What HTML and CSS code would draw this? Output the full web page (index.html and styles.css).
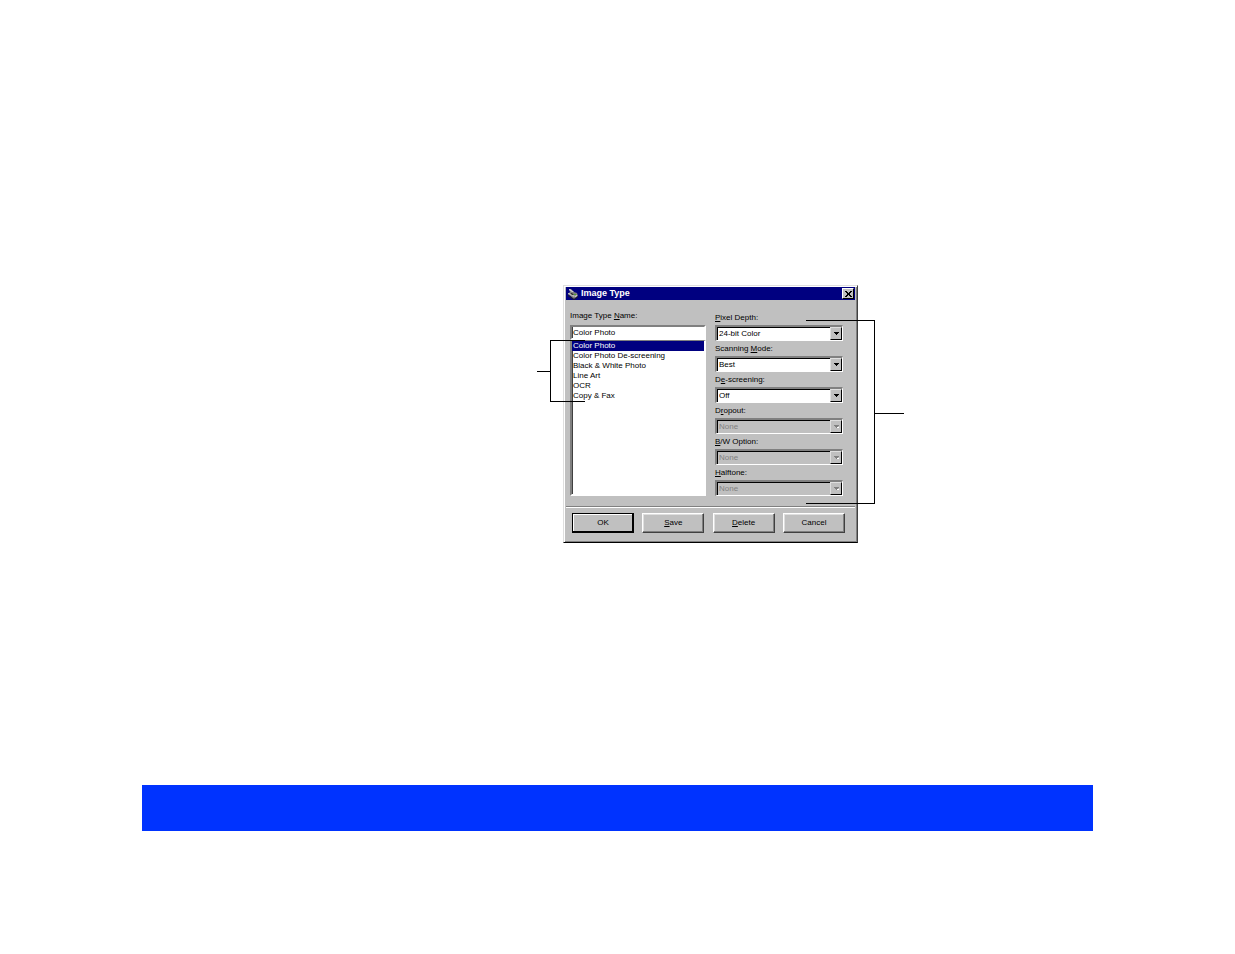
FILE: index.html
```html
<!DOCTYPE html>
<html lang="en">

<head>
    <meta charset="UTF-8">
    <meta name="viewport" content="width=device-width, initial-scale=1.0">
    <title>Image Type</title>
    <link rel="stylesheet" href="styles.css">
</head>

<body>
    <main class="sheet">
        <div class="figure">
            <form class="window">
                <div class="title-bar">
                    <svg class="title-icon" viewBox="0 0 12 12" aria-hidden="true">
                        <path d="M2 1h2l3 3 3 1 1 3-4 3-6-5 2-2z" fill="#808080"/>
                        <path d="M2 1h1l4 3h-2l-3-2z" fill="#d0d0d0"/>
                        <path d="M1 5h3l4 3-1 1-6-3z" fill="#b8b8b8"/>
                        <path d="M3 5h2l2 2h-2z" fill="#303030"/>
                        <path d="M1 7l6 4 4-3v1l-4 3-6-4z" fill="#202020"/>
                        <path d="M7 6h2v1h-2z" fill="#50a030"/>
                        <path d="M8 8l2-1v1l-2 1z" fill="#e0e0e0"/>
                    </svg>
                    <h1>Image Type</h1>
                    <button type="button" class="close" aria-label="Close">
                        <svg viewBox="0 0 7 6" aria-hidden="true"><path d="M0 0l6 6M1 0l6 6M6 0l-6 6M7 0l-6 6" stroke="#000"/></svg>
                    </button>
                </div>

                <div class="panels">
                    <div class="names">
                        <label for="type-name">Image Type <u>N</u>ame:</label>
                        <input type="text" id="type-name" value="Color Photo">
                        <select id="type-list" size="6" aria-label="Image types">
                            <option selected>Color Photo</option>
                            <option>Color Photo De-screening</option>
                            <option>Black &amp; White Photo</option>
                            <option>Line Art</option>
                            <option>OCR</option>
                            <option>Copy &amp; Fax</option>
                        </select>
                    </div>

                    <div class="settings">
                        <div class="field">
                            <label for="depth"><u>P</u>ixel Depth:</label>
                            <div class="combo"><select id="depth"><option>24-bit Color</option></select></div>
                        </div>
                        <div class="field">
                            <label for="mode">Scanning <u>M</u>ode:</label>
                            <div class="combo"><select id="mode"><option>Best</option></select></div>
                        </div>
                        <div class="field">
                            <label for="screening">D<u>e</u>-screening:</label>
                            <div class="combo"><select id="screening"><option>Off</option></select></div>
                        </div>
                        <div class="field">
                            <label for="dropout">D<u>r</u>opout:</label>
                            <div class="combo disabled"><select id="dropout" disabled><option>None</option></select></div>
                        </div>
                        <div class="field">
                            <label for="bw"><u>B</u>/W Option:</label>
                            <div class="combo disabled"><select id="bw" disabled><option>None</option></select></div>
                        </div>
                        <div class="field">
                            <label for="halftone"><u>H</u>alftone:</label>
                            <div class="combo disabled"><select id="halftone" disabled><option>None</option></select></div>
                        </div>
                    </div>
                </div>

                <div class="actions">
                    <button type="button" class="default">OK</button>
                    <button type="button"><span><u>S</u>ave</span></button>
                    <button type="button"><span><u>D</u>elete</span></button>
                    <button type="button">Cancel</button>
                </div>
            </form>

            <div class="callout callout-left"></div>
            <div class="callout callout-right"></div>
        </div>

        <div class="banner"></div>
    </main>
</body>

</html>
```

FILE: styles.css
```css
:root {
    --face: #c0c0c0;
    --light: #ffffff;
    --soft: #dfdfdf;
    --shadow: #808080;
    --dark: #000000;
    --navy: #000080;
    --banner: #0033ff;
}

* {
    margin: 0;
    padding: 0;
    box-sizing: border-box;
}

body {
    background-color: #fff;
    color: #000;
    font-family: "Liberation Sans", Arial, sans-serif;
    font-size: 8px;
    line-height: 12px;
}

input,
select,
button {
    font: inherit;
    color: inherit;
    border-radius: 0;
    outline: none;
}

.sheet {
    padding: 285px 142px 123px;
}

.figure {
    position: relative;
    width: 295px;
    margin-left: 421px;
    margin-bottom: 242px;
}

/* dialog window */
.window {
    background-color: var(--face);
    border: 1px solid;
    border-color: var(--soft) #404040 var(--dark) var(--soft);
    box-shadow: inset 1px 1px var(--light), inset -1px -1px var(--shadow);
    padding: 1px 2px 9px;
}

.title-bar {
    display: flex;
    align-items: center;
    gap: 2px;
    height: 13px;
    padding: 0 1px;
    background-color: var(--navy);
    color: #fff;
}

.title-icon {
    width: 12px;
    height: 12px;
}

.title-bar h1 {
    flex: 1;
    font-size: 9px;
    line-height: 13px;
}

.close {
    display: flex;
    align-items: center;
    justify-content: center;
    width: 12px;
    height: 11px;
    background-color: var(--face);
    border: 1px solid;
    border-color: var(--light) var(--dark) var(--dark) var(--light);
}

.close svg {
    width: 7px;
    height: 6px;
}

.panels {
    display: flex;
    justify-content: space-between;
    padding: 10px 12px 10px 4px;
}

.names {
    display: flex;
    flex-direction: column;
    width: 136px;
}

.names label {
    margin-bottom: 3px;
}

.names input,
.names select,
.combo {
    background-color: #fff;
    border: 2px solid;
    border-color: var(--shadow) var(--light) var(--light) var(--shadow);
    box-shadow: inset 1px 0 #404040;
}

.names input {
    height: 15px;
    padding-left: 1px;
    line-height: 11px;
}

#type-list {
    flex: 1;
    appearance: none;
    overflow: hidden;
    border-top-width: 1px;
}

#type-list option {
    min-height: 10px;
    height: 10px;
    padding: 0 1px;
    line-height: 10px;
}

#type-list option:checked {
    background: linear-gradient(var(--navy), var(--navy));
    color: #fff;
}

.settings {
    display: flex;
    flex-direction: column;
    gap: 2px;
    width: 128px;
    padding-top: 2px;
}

.field {
    display: flex;
    flex-direction: column;
    gap: 1px;
}

.combo {
    display: grid;
    grid-template-columns: 1fr 12px;
    height: 16px;
    border-width: 2px 1px 1px 2px;
    border-color: var(--shadow) var(--light) var(--light) var(--shadow);
    box-shadow: inset 1px 1px var(--dark);
}

.combo select {
    grid-area: 1 / 1 / 2 / 3;
    appearance: none;
    background: none;
    border: none;
    padding-left: 2px;
    line-height: 13px;
}

.combo::after {
    content: "";
    grid-area: 1 / 2;
    pointer-events: none;
    border: 1px solid;
    border-color: var(--soft) var(--dark) var(--dark) var(--soft);
    background: linear-gradient(#000, #000) 3px 4px / 5px 1px no-repeat,
        linear-gradient(#000, #000) 4px 5px / 3px 1px no-repeat,
        linear-gradient(#000, #000) 5px 6px / 1px 1px no-repeat,
        var(--face);
}

.combo.disabled {
    background-color: var(--face);
}

.combo.disabled select {
    color: var(--shadow);
    opacity: 1;
}

.combo.disabled::after {
    background: linear-gradient(#808080, #808080) 3px 4px / 5px 1px no-repeat,
        linear-gradient(#808080, #808080) 4px 5px / 3px 1px no-repeat,
        linear-gradient(#808080, #808080) 5px 6px / 1px 1px no-repeat,
        linear-gradient(#fff, #fff) 6px 6px / 2px 1px no-repeat,
        var(--face);
}

/* buttons */
.actions {
    display: flex;
    justify-content: space-between;
    padding: 6px 10px 0 6px;
    border-top: 1px solid var(--shadow);
    box-shadow: inset 0 1px var(--light);
}

.actions button {
    width: 62px;
    height: 20px;
    background-color: var(--face);
    border: 1px solid;
    border-color: var(--light) #404040 #404040 var(--light);
    box-shadow: inset -1px -1px var(--shadow), inset 1px 1px var(--soft);
}

.actions .default {
    border-color: var(--dark);
    box-shadow: inset -1px -1px var(--dark), inset 1px 1px var(--light);
}

/* callout brackets over the window */
.callout {
    position: absolute;
    border: 1px solid #000;
    pointer-events: none;
}

.callout::before {
    content: "";
    position: absolute;
    border-top: 1px solid #000;
}

.callout-left {
    top: 55px;
    left: -13px;
    width: 35px;
    height: 62px;
    border-right: none;
}

.callout-left::before {
    top: 30px;
    right: 100%;
    width: 14px;
}

.callout-right {
    top: 35px;
    left: 243px;
    width: 69px;
    height: 184px;
    border-left: none;
}

.callout-right::before {
    top: 92px;
    left: 100%;
    width: 30px;
}

.banner {
    height: 46px;
    background-color: var(--banner);
}
```
